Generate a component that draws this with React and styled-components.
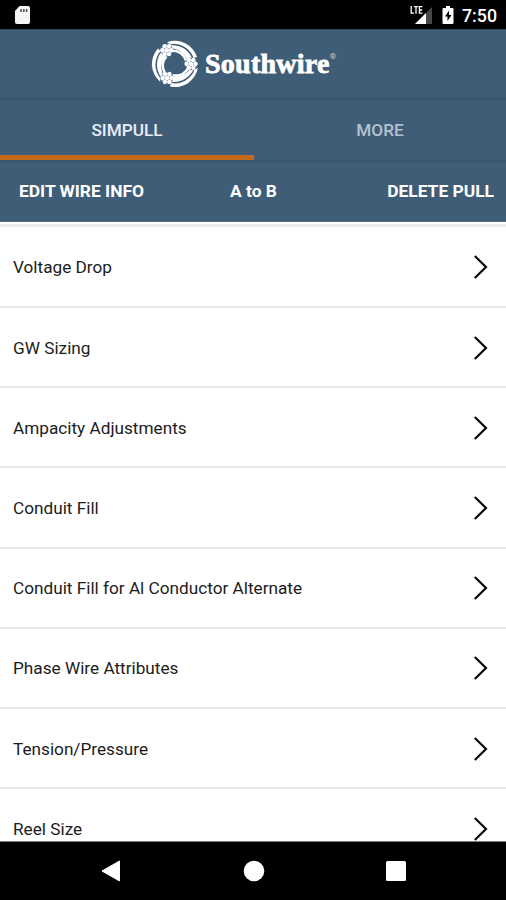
import React from 'react';
import styled, { createGlobalStyle } from 'styled-components';

const Global = createGlobalStyle`
  * { box-sizing: border-box; }
  body { margin: 0; background: #fff; }
`;

const Screen = styled.div`
  width: 506px;
  height: 900px;
  display: flex;
  flex-direction: column;
  overflow: hidden;
  background: #fff;
  color: #1c1c1c;
  font-family: Roboto, sans-serif;
`;

const StatusBar = styled.div`
  flex: none;
  height: 30px;
  padding: 1px 9px 0 14px;
  display: flex;
  align-items: center;
  background: #000;
  border-bottom: 1px solid #30495f;
  color: #fff;
`;

const StatusRight = styled.div`
  margin-left: auto;
  display: flex;
  align-items: center;
  gap: 8px;
`;

const Clock = styled.span`
  width: 35px;
  padding-top: 2px;
  white-space: nowrap;
  font-size: 17.8px;
  line-height: 20px;
  font-weight: 500;
`;

const Header = styled.header`
  flex: none;
  height: 71px;
  padding: 10px 0 0 151px;
  display: flex;
  align-items: flex-start;
  background: linear-gradient(#405d77 0 67px, #38536b 68px, #38536b 69px, #405d77 71px);
  color: #fff;
`;

const Brand = styled.div`
  margin: 8px 0 0 6px;
  display: flex;
  font-family: 'Liberation Serif', serif;
  font-weight: 700;
  font-size: 28px;
  line-height: 32px;
  letter-spacing: 0.25px;
  -webkit-text-stroke: 0.8px #fff;
`;

const Registered = styled.sup`
  margin: 3px 0 0 0;
  font-family: Roboto, sans-serif;
  font-weight: 400;
  font-size: 8px;
  line-height: 12px;
  opacity: 0.7;
  -webkit-text-stroke: 0;
`;

const Tabs = styled.nav`
  flex: none;
  height: 61px;
  display: grid;
  grid-template-columns: 254px 252px;
  background: linear-gradient(#405d77 0 58px, #38536b 60px, #3a556d 61px);
`;

const Tab = styled.button`
  border: 0;
  height: 59px;
  background: none;
  border-bottom: 5px solid ${(p) => (p.$active ? '#c56a1a' : 'transparent')};
  color: ${(p) => (p.$active ? '#e8eef6' : '#b4c2d0')};
  font: 500 17.2px/20px Roboto, sans-serif;
  padding: 5px 0 1px;
`;

const Actions = styled.div`
  flex: none;
  height: 60px;
  padding: 0 12px 1px 19px;
  display: grid;
  grid-template-columns: 211px 47px 1fr;
  align-items: center;
  background: #405d77;
  border-bottom: 1px solid #526d85;
`;

const Action = styled.button`
  border: 0;
  padding: 0;
  background: none;
  color: #fff;
  white-space: nowrap;
  text-align: ${(p) => p.$align};
  font: 700 17.4px/20px Roboto, sans-serif;
`;

const List = styled.main`
  flex: 1;
  min-height: 0;
  overflow: hidden;
  margin-top: 2px;
  border-top: 3px solid #ededed;
  border-bottom: 1px solid #7c7c7c;
`;

const Row = styled.div`
  height: 80.2px;
  padding: 0 17px 1px 13px;
  display: flex;
  align-items: center;
  justify-content: space-between;
  font-size: 17.2px;
  line-height: 20px;
  background: linear-gradient(#e8e8e8, #e8e8e8) 0 100% / 100% 2px no-repeat;

  &:first-child {
    height: 81px;
  }
`;

const NavBar = styled.footer`
  flex: none;
  height: 58px;
  padding: 0 100px 0 101px;
  display: flex;
  align-items: center;
  justify-content: space-between;
  background: #000;
`;

const cluster = [[0, 0], [4.4, 0], [-4.4, 0], [2.2, 3.9], [-2.2, 3.9], [2.2, -3.9], [-2.2, -3.9]];

const Emblem = () => (
  <svg width="48" height="48" viewBox="-24 -24 48 48" fill="none">
    {[0, 120, 240].map((a) => (
      <g key={a} transform={`rotate(${a})`}>
        <path d="M-8-21.8A23.2 23.2 0 0 1 22-7L18.5-6A21 21 0 0 0-5-19.8Z" fill="#fff" />
        <path d="M-5-18.8C6-19.5 15-13.5 17.8-4L12.5-3C10-11 3-15.5-5-15.8Z" fill="#fff" />
        <path d="M-4-13.5C4-13.5 9-9.5 11-3.5" stroke="#fff" strokeWidth="2.6" />
      </g>
    ))}
    {[0, 120, 240].map((a) => (
      <g key={a} transform={`rotate(${a}) translate(-8.2 -13.8)`}>
        <circle r="6.2" fill="#6d87a0" />
        {cluster.map(([x, y]) => (
          <circle key={`${x},${y}`} cx={x} cy={y} r="2.2" fill="#fff" />
        ))}
      </g>
    ))}
  </svg>
);

const SdCard = () => (
  <svg width="17" height="20" viewBox="0 0 17 20">
    <path d="M5.5 1H14q2 0 2 2v14q0 2-2 2H3q-2 0-2-2V6Z" fill="#f5f5f5" />
    <path d="M7 4v3M9.8 4v3M12.6 4v3" stroke="#555" strokeWidth="1.6" />
  </svg>
);

const Signal = () => (
  <svg width="24" height="20" viewBox="0 0 24 20">
    <path d="M5 19 22 2v17Z" fill="#484848" />
    <path d="M5 19 16 8v11Z" fill="#fff" />
    <path d="M0 0h13v10H0Z" fill="#000" />
    <path d="M1.2 1v7.2H4M3.8 1.6h4.4M6 1.6v7.2M12.4 1.6H9.4v6.6h3M9.4 5h2.8" stroke="#fff" strokeWidth="1.3" />
  </svg>
);

const Battery = () => (
  <svg width="12" height="20" viewBox="0 0 12 20">
    <path d="M4 1h4v2h2.5q1 0 1 1v14q0 1-1 1h-9q-1 0-1-1V4q0-1 1-1H4Z" fill="#fff" />
    <path d="M7 5.5 3 11.5h2.5V16L9.5 10H7Z" fill="#000" />
  </svg>
);

const Chevron = () => (
  <svg width="17" height="26" viewBox="0 0 17 26">
    <path d="M2.8 2 14 13 2.8 24" fill="none" stroke="#080808" strokeWidth="2.2" />
  </svg>
);

const rows = [
  'Voltage Drop',
  'GW Sizing',
  'Ampacity Adjustments',
  'Conduit Fill',
  'Conduit Fill for Al Conductor Alternate',
  'Phase Wire Attributes',
  'Tension/Pressure',
  'Reel Size',
];

export default function App() {
  return (
    <Screen>
      <Global />
      <StatusBar>
        <SdCard />
        <StatusRight>
          <Signal />
          <Battery />
          <Clock>7:50</Clock>
        </StatusRight>
      </StatusBar>
      <Header>
        <Emblem />
        <Brand>Southwire<Registered>®</Registered></Brand>
      </Header>
      <Tabs>
        <Tab $active>SIMPULL</Tab>
        <Tab>MORE</Tab>
      </Tabs>
      <Actions>
        <Action $align="left">EDIT WIRE INFO</Action>
        <Action $align="center">A to B</Action>
        <Action $align="right">DELETE PULL</Action>
      </Actions>
      <List>
        {rows.map((label) => (
          <Row key={label}>
            <span>{label}</span>
            <Chevron />
          </Row>
        ))}
      </List>
      <NavBar>
        <svg width="20" height="22" viewBox="0 0 20 22">
          <path d="M18.5 1v20L1 11Z" fill="#fff" stroke="#fff" strokeLinejoin="round" />
        </svg>
        <svg width="22" height="22" viewBox="0 0 22 22"><circle cx="11" cy="11" r="10.3" fill="#fff" /></svg>
        <svg width="20" height="20" viewBox="0 0 20 20"><rect width="20" height="20" rx="1.5" fill="#fff" /></svg>
      </NavBar>
    </Screen>
  );
}
